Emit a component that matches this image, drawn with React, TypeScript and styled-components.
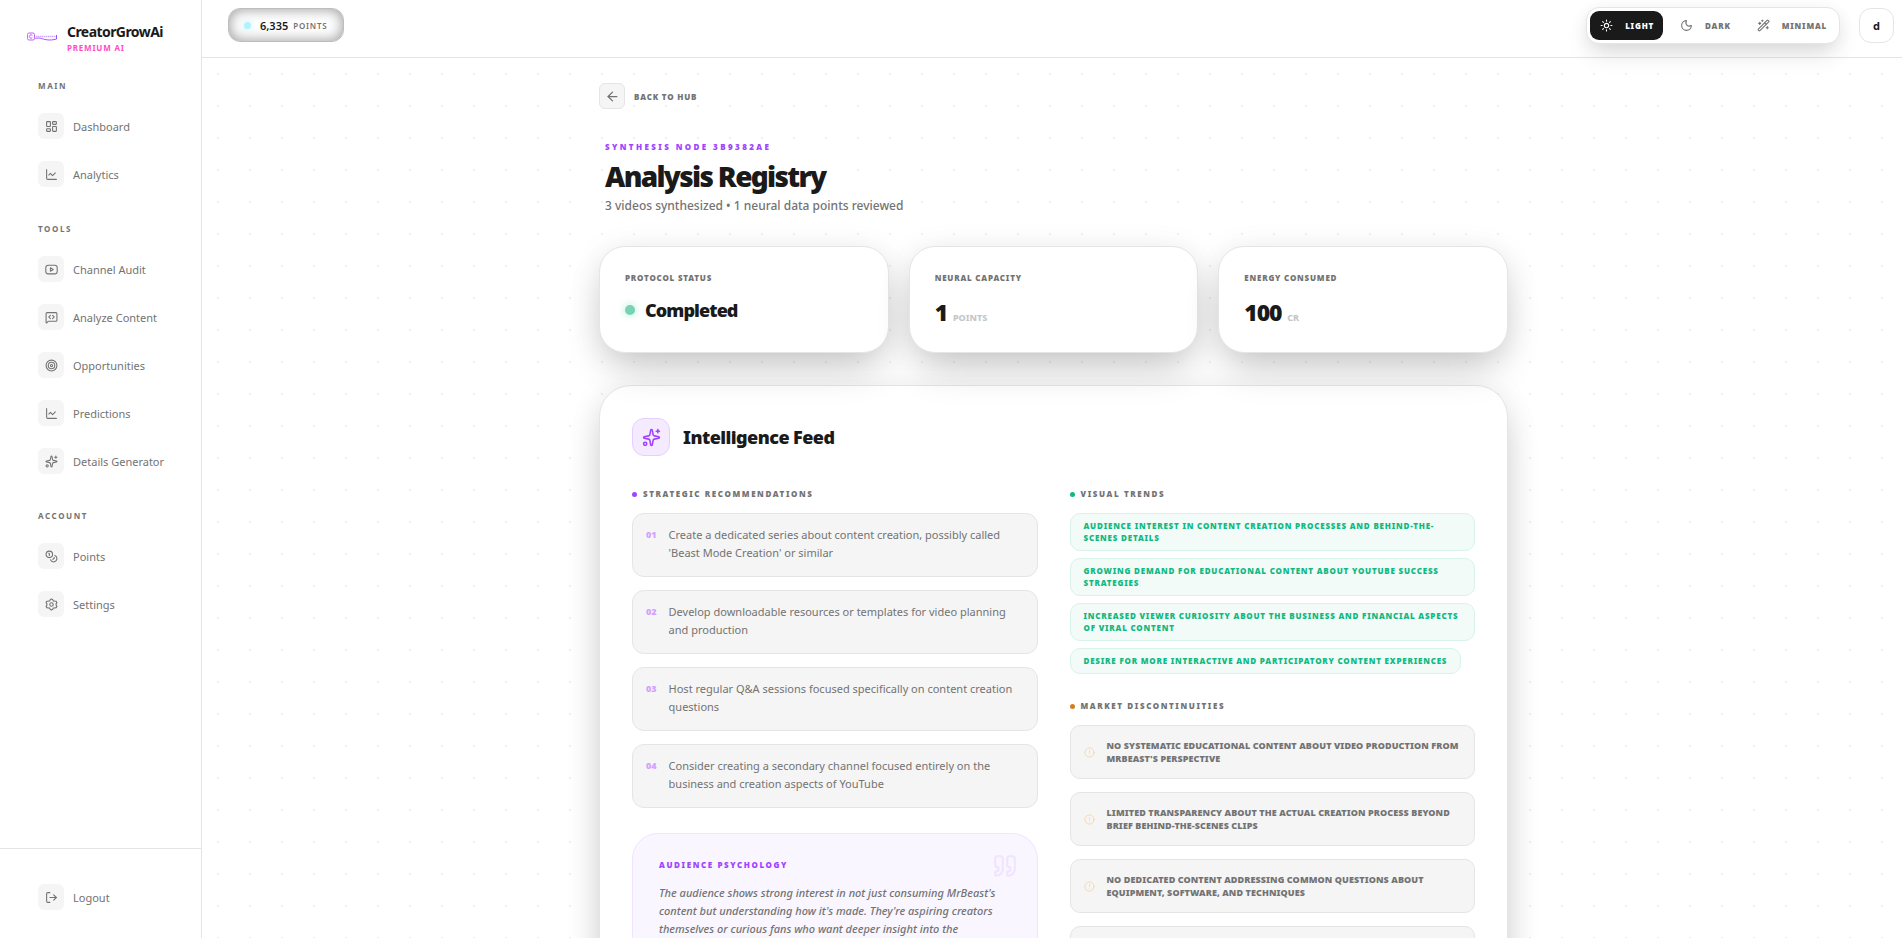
import React from "react";
import styled, { createGlobalStyle, css } from "styled-components";
import {
  ArrowLeft, ChartLine, CircleAlert, Coins, LayoutDashboard, LogOut, MessageSquareCode, Moon,
  Quote, Sparkles, Sun, Target, WandSparkles,
} from "lucide-react";

const ink = "#1a1a1a";
const muted = "#737373";
const line = "#e5e5e5";
const purple = "#a044ff";
const green = "#10b981";
const surface = "#f5f5f5";
const cardShadow = "0 20px 40px -8px rgba(0, 0, 0, 0.2), 0 4px 32px rgba(0, 0, 0, 0.08)";

const GlobalStyle = createGlobalStyle`
  *, *::before, *::after { box-sizing: border-box; }
  body {
    margin: 0;
    background: #fff;
    color: ${ink};
    font-family: "Noto Sans", sans-serif;
  }
  h1, h2, h3, p, ul, ol { margin: 0; padding: 0; }
  ul, ol { list-style: none; }
  button { font: inherit; cursor: pointer; }
  a { color: inherit; text-decoration: none; }
`;

const Shell = styled.div`
  display: grid;
  grid-template-columns: 202px minmax(0, 1fr);
  height: 100vh;
`;

const Sidebar = styled.aside`
  display: flex;
  flex-direction: column;
  height: 100vh;
  border-right: 1px solid ${line};
  background: #fff;
`;

const Brand = styled.a`
  display: flex;
  align-items: center;
  gap: 10px;
  padding: 22px 0 0 27px;
`;

const BrandName = styled.div`
  font-size: 14px;
  font-weight: 700;
  line-height: 20px;
  letter-spacing: -0.04em;
`;

const BrandTag = styled.div`
  color: #ff4dc4;
  font-size: 8px;
  font-weight: 700;
  line-height: 12px;
  letter-spacing: 0.1em;
`;

const Nav = styled.nav`
  flex: 1;
  padding: 26px 0 0 38px;
`;

const NavSection = styled.section`
  margin-bottom: 29px;
`;

const NavLabel = styled.h3`
  margin-bottom: 14px;
  color: ${muted};
  font-size: 8px;
  font-weight: 700;
  line-height: 12px;
  letter-spacing: 0.2em;
`;

const NavList = styled.ul`
  display: flex;
  flex-direction: column;
  gap: 8px;
`;

const NavLink = styled.a`
  display: flex;
  align-items: center;
  gap: 9px;
  height: 40px;
  color: ${muted};
  font-size: 11px;
  font-weight: 400;
`;

const NavIcon = styled.span`
  display: grid;
  place-items: center;
  width: 26px;
  height: 26px;
  border-radius: 6px;
  background: ${surface};
`;

const SidebarFooter = styled.div`
  height: 90px;
  padding: 28px 0 0 38px;
  border-top: 1px solid ${line};
`;

const Page = styled.div`
  display: flex;
  flex-direction: column;
  min-width: 0;
  height: 100vh;
`;

const TopBar = styled.header`
  position: relative;
  z-index: 1;
  display: flex;
  align-items: flex-start;
  justify-content: space-between;
  height: 58px;
  padding: 7px 8px 0 26px;
  border-bottom: 1px solid ${line};
`;

const PointsPill = styled.button`
  display: flex;
  align-items: center;
  height: 34px;
  margin-top: 1px;
  padding: 0 15px;
  border: 1px solid #bdbdbd;
  border-radius: 12px;
  background: #fff;
  box-shadow: inset 0 0 14px rgba(0, 0, 0, 0.42);
  color: ${ink};
  font-size: 11px;
  font-weight: 600;

  small {
    margin-left: 5px;
    color: ${muted};
    font-size: 8px;
    letter-spacing: 0.1em;
  }
`;

const CyanDot = styled.span`
  width: 7px;
  height: 7px;
  margin-right: 9px;
  border-radius: 50%;
  background: #b5f1fb;
  box-shadow: 0 0 6px #b5f1fb;
`;

const TopActions = styled.div`
  display: flex;
  gap: 19px;
`;

const ThemeSwitch = styled.div`
  display: flex;
  gap: 7px;
  height: 37px;
  padding: 3px;
  border: 1px solid ${line};
  border-radius: 13px;
  background: #fff;
  box-shadow: 0 12px 24px -4px rgba(0, 0, 0, 0.14), 0 2px 16px rgba(0, 0, 0, 0.05);
`;

const ThemeButton = styled.button<{ $active?: boolean }>`
  display: flex;
  align-items: center;
  gap: 12px;
  height: 29px;
  padding: 0 9px 0 10px;
  border: 0;
  border-radius: 9px;
  background: ${(p) => (p.$active ? ink : "transparent")};
  color: ${(p) => (p.$active ? "#fff" : muted)};
  font-size: 8px;
  font-weight: 900;
  letter-spacing: 0.1em;
`;

const Avatar = styled.button`
  width: 35px;
  height: 35px;
  margin-top: 1px;
  padding: 0;
  border: 1px solid ${line};
  border-radius: 12px;
  background: #fff;
  color: ${ink};
  font-size: 11px;
  font-weight: 700;
`;

const Main = styled.main`
  flex: 1;
  min-height: 0;
  overflow-y: auto;
  scrollbar-width: none;
  padding: 25px 24px 40px 27px;
  background-image: radial-gradient(#f0f0f0 1px, transparent 1px);
  background-size: 32px 32px;
`;

const Content = styled.div`
  max-width: 909px;
  margin: 0 auto;
`;

const BackLink = styled.a`
  display: inline-flex;
  align-items: center;
  gap: 9px;
  color: ${muted};
  font-size: 8px;
  font-weight: 900;
  letter-spacing: 0.1em;
`;

const BackIcon = styled.span`
  display: grid;
  place-items: center;
  width: 26px;
  height: 26px;
  border: 1px solid ${line};
  border-radius: 6px;
  background: ${surface};
`;

const Heading = styled.div`
  padding: 32px 6px 0;
`;

const Eyebrow = styled.p`
  color: ${purple};
  font-size: 8px;
  font-weight: 900;
  line-height: 12px;
  letter-spacing: 0.3em;
`;

const Title = styled.h1`
  margin-top: 6px;
  font-size: 28px;
  font-weight: 900;
  line-height: 34px;
  letter-spacing: -0.06em;
`;

const Subtitle = styled.p`
  margin-top: 2px;
  color: ${muted};
  font-size: 12px;
  font-weight: 500;
  line-height: 22px;
`;

const Stats = styled.div`
  display: grid;
  grid-template-columns: repeat(3, minmax(0, 1fr));
  gap: 20px;
  margin-top: 29px;
`;

const StatCard = styled.section`
  height: 107px;
  padding: 25px;
  border: 1px solid ${line};
  border-radius: 26px;
  background: #fff;
  box-shadow: ${cardShadow};
`;

const StatLabel = styled.h3`
  color: ${muted};
  font-size: 8px;
  font-weight: 900;
  line-height: 12px;
  letter-spacing: 0.1em;
`;

const StatValue = styled.p<{ $large?: boolean }>`
  display: flex;
  align-items: ${(p) => (p.$large ? "baseline" : "center")};
  gap: ${(p) => (p.$large ? 6 : 10)}px;
  margin-top: ${(p) => (p.$large ? 12 : 14)}px;
  font-size: ${(p) => (p.$large ? 23 : 18)}px;
  font-weight: 900;
  line-height: ${(p) => (p.$large ? 32 : 24)}px;
  letter-spacing: -0.05em;

  small {
    color: #c4c7c6;
    font-size: 9px;
    font-weight: 800;
    letter-spacing: 0;
  }
`;

const StatusDot = styled.span`
  width: 10px;
  height: 10px;
  border-radius: 50%;
  background: #77d3b4;
  box-shadow: 0 0 8px #a5e8d2;
`;

const Feed = styled.section`
  margin-top: 32px;
  padding: 32px;
  border: 1px solid ${line};
  border-radius: 32px;
  background: #fff;
  box-shadow: ${cardShadow};
`;

const FeedHeader = styled.div`
  display: flex;
  align-items: center;
  gap: 13px;
  margin-bottom: 32px;
`;

const FeedIcon = styled.span`
  display: grid;
  place-items: center;
  width: 38px;
  height: 38px;
  border: 1px solid #e6cfff;
  border-radius: 12px;
  background: #f5ebff;
  color: ${purple};
`;

const FeedTitle = styled.h2`
  font-size: 18px;
  font-weight: 900;
  line-height: 26px;
  letter-spacing: -0.03em;
`;

const Columns = styled.div`
  display: grid;
  grid-template-columns: repeat(2, minmax(0, 1fr));
  gap: 32px;
`;

const SectionLabel = styled.h3<{ $dot: string }>`
  display: flex;
  align-items: center;
  gap: 6px;
  margin-bottom: 13px;
  color: ${muted};
  font-size: 8px;
  font-weight: 900;
  line-height: 12px;
  letter-spacing: 0.2em;

  &::before {
    content: "";
    width: 5px;
    height: 5px;
    border-radius: 50%;
    background: ${(p) => p.$dot};
  }
`;

const panel = css`
  border: 1px solid ${line};
  background: ${surface};
  color: ${muted};
`;

const Recommendations = styled.ol`
  display: flex;
  flex-direction: column;
  gap: 13px;
`;

const Recommendation = styled.li`
  ${panel}
  display: flex;
  gap: 12px;
  height: 64px;
  padding: 12px 13px;
  border-radius: 12px;
  font-size: 11px;
  font-weight: 400;
  line-height: 18px;
`;

const Ordinal = styled.span`
  color: #d2a2ff;
  font-size: 9px;
  font-weight: 900;
  line-height: 18px;
`;

const Psychology = styled.section`
  position: relative;
  margin-top: 25px;
  padding: 25px 26px;
  border: 1px solid #f0e4ff;
  border-radius: 26px;
  background: #f9f6ff;
`;

const PsychologyTitle = styled.h3`
  color: ${purple};
  font-size: 8px;
  font-weight: 900;
  line-height: 12px;
  letter-spacing: 0.2em;
`;

const PsychologyText = styled.p`
  margin-top: 13px;
  color: ${muted};
  font-size: 11px;
  font-style: italic;
  font-weight: 500;
  line-height: 18px;
`;

const QuoteMark = styled(Quote)`
  position: absolute;
  top: 19px;
  right: 19px;
  color: #f0e4ff;
`;

const Trends = styled.ul`
  display: flex;
  flex-wrap: wrap;
  gap: 7px;
`;

const Trend = styled.li`
  padding: 6px 13px;
  border: 1px solid #d8f3ea;
  border-radius: 10px;
  background: #f2fbf8;
  color: ${green};
  font-size: 8px;
  font-weight: 900;
  line-height: 12px;
  letter-spacing: 0.1em;
`;

const GapSection = styled.section`
  margin-top: 26px;
`;

const Gaps = styled.ul`
  display: flex;
  flex-direction: column;
  gap: 13px;
`;

const Gap = styled.li`
  ${panel}
  display: flex;
  align-items: center;
  gap: 12px;
  height: 54px;
  padding: 0 13px;
  border-radius: 10px;
  font-size: 9px;
  font-weight: 900;
  line-height: 13px;
  letter-spacing: 0.01em;

  svg { flex: none; color: #fad5a0; }
`;

function VideoIcon({ size = 13 }: { size?: number }) {
  return (
    <svg width={size} height={size} viewBox="0 0 24 24" fill="none" stroke="currentColor" strokeWidth="2" strokeLinejoin="round">
      <rect x="1.5" y="4" width="21" height="16" rx="4.5" />
      <path d="M10 8.8v6.4l5.2-3.2z" />
    </svg>
  );
}

function GearIcon({ size = 13 }: { size?: number }) {
  return (
    <svg width={size} height={size} viewBox="0 0 24 24" fill="none" stroke="currentColor" strokeWidth="2" strokeLinejoin="round">
      <path d="M9.6 3.2 12 1.6l2.4 1.6 1 2.2 2.4.3 2.9.2 1.3 2.7-1.5 2.2v2.4l1.5 2.2-1.3 2.7-2.9.2-2.4.3-1 2.2-2.4 1.6-2.4-1.6-1-2.2-2.4-.3-2.9-.2L2 15.4l1.5-2.2v-2.4L2 8.6l1.3-2.7 2.9-.2 2.4-.3z" />
      <circle cx="12" cy="12" r="3.2" />
    </svg>
  );
}

const sections = [
  { title: "MAIN", items: [["Dashboard", LayoutDashboard], ["Analytics", ChartLine]] },
  {
    title: "TOOLS",
    items: [
      ["Channel Audit", VideoIcon], ["Analyze Content", MessageSquareCode],
      ["Opportunities", Target], ["Predictions", ChartLine], ["Details Generator", Sparkles],
    ],
  },
  { title: "ACCOUNT", items: [["Points", Coins], ["Settings", GearIcon]] },
] as { title: string; items: [string, React.ElementType][] }[];

const recommendations = [
  "Create a dedicated series about content creation, possibly called 'Beast Mode Creation' or similar",
  "Develop downloadable resources or templates for video planning and production",
  "Host regular Q&A sessions focused specifically on content creation questions",
  "Consider creating a secondary channel focused entirely on the business and creation aspects of YouTube",
];

const trends = [
  "AUDIENCE INTEREST IN CONTENT CREATION PROCESSES AND BEHIND-THE-SCENES DETAILS",
  "GROWING DEMAND FOR EDUCATIONAL CONTENT ABOUT YOUTUBE SUCCESS STRATEGIES",
  "INCREASED VIEWER CURIOSITY ABOUT THE BUSINESS AND FINANCIAL ASPECTS OF VIRAL CONTENT",
  "DESIRE FOR MORE INTERACTIVE AND PARTICIPATORY CONTENT EXPERIENCES",
];

const gaps = [
  "NO SYSTEMATIC EDUCATIONAL CONTENT ABOUT VIDEO PRODUCTION FROM MRBEAST'S PERSPECTIVE",
  "LIMITED TRANSPARENCY ABOUT THE ACTUAL CREATION PROCESS BEYOND BRIEF BEHIND-THE-SCENES CLIPS",
  "NO DEDICATED CONTENT ADDRESSING COMMON QUESTIONS ABOUT EQUIPMENT, SOFTWARE, AND TECHNIQUES",
  "",
];

function Logo() {
  return (
    <svg width="30" height="12" viewBox="0 0 30 12" fill="none" aria-hidden="true">
      <defs>
        <linearGradient id="brand" x1="0" y1="0" x2="30" y2="0" gradientUnits="userSpaceOnUse">
          <stop stopColor="#e25cf0" />
          <stop offset="0.4" stopColor="#b05cff" />
          <stop offset="1" stopColor="#9a4dff" />
        </linearGradient>
      </defs>
      <rect x="0.5" y="1" width="7" height="7" rx="1.5" stroke="url(#brand)" />
      <path d="M5.3 3.3a1.7 1.7 0 1 0 0 2.4" stroke="#b05cff" />
      <path d="M9 4.5h20" stroke="#d3a6ff" strokeWidth="1.5" strokeDasharray="1.5 0.5" />
      <path d="M8 6.3c5-1 7 .8 11 1.4s7 .3 10.5-.7V3" stroke="url(#brand)" />
    </svg>
  );
}

function NavItem({ label, icon: Icon }: { label: string; icon: React.ElementType }) {
  return (
    <NavLink href="#">
      <NavIcon><Icon size={13} /></NavIcon>
      {label}
    </NavLink>
  );
}

export default function App() {
  return (
    <>
      <GlobalStyle />
      <Shell>
        <Sidebar>
          <Brand href="#">
            <Logo />
            <div>
              <BrandName>CreatorGrowAi</BrandName>
              <BrandTag>PREMIUM AI</BrandTag>
            </div>
          </Brand>
          <Nav>
            {sections.map((s) => (
              <NavSection key={s.title}>
                <NavLabel>{s.title}</NavLabel>
                <NavList>
                  {s.items.map(([label, icon]) => (
                    <li key={label}><NavItem label={label} icon={icon} /></li>
                  ))}
                </NavList>
              </NavSection>
            ))}
          </Nav>
          <SidebarFooter><NavItem label="Logout" icon={LogOut} /></SidebarFooter>
        </Sidebar>
        <Page>
          <TopBar>
            <PointsPill><CyanDot />6,335 <small>POINTS</small></PointsPill>
            <TopActions>
              <ThemeSwitch>
                <ThemeButton $active><Sun size={13} />LIGHT</ThemeButton>
                <ThemeButton><Moon size={13} />DARK</ThemeButton>
                <ThemeButton><WandSparkles size={13} />MINIMAL</ThemeButton>
              </ThemeSwitch>
              <Avatar>d</Avatar>
            </TopActions>
          </TopBar>
          <Main>
            <Content>
              <BackLink href="#">
                <BackIcon><ArrowLeft size={15} strokeWidth={2} /></BackIcon>BACK TO HUB
              </BackLink>
              <Heading>
                <Eyebrow>SYNTHESIS NODE 3B9382AE</Eyebrow>
                <Title>Analysis Registry</Title>
                <Subtitle>3 videos synthesized • 1 neural data points reviewed</Subtitle>
              </Heading>
              <Stats>
                <StatCard>
                  <StatLabel>PROTOCOL STATUS</StatLabel>
                  <StatValue><StatusDot />Completed</StatValue>
                </StatCard>
                <StatCard>
                  <StatLabel>NEURAL CAPACITY</StatLabel>
                  <StatValue $large>1 <small>POINTS</small></StatValue>
                </StatCard>
                <StatCard>
                  <StatLabel>ENERGY CONSUMED</StatLabel>
                  <StatValue $large>100 <small>CR</small></StatValue>
                </StatCard>
              </Stats>
              <Feed>
                <FeedHeader>
                  <FeedIcon><Sparkles size={19} /></FeedIcon>
                  <FeedTitle>Intelligence Feed</FeedTitle>
                </FeedHeader>
                <Columns>
                  <div>
                    <SectionLabel $dot={purple}>STRATEGIC RECOMMENDATIONS</SectionLabel>
                    <Recommendations>
                      {recommendations.map((text, i) => (
                        <Recommendation key={text}><Ordinal>0{i + 1}</Ordinal><p>{text}</p></Recommendation>
                      ))}
                    </Recommendations>
                    <Psychology>
                      <QuoteMark size={26} />
                      <PsychologyTitle>AUDIENCE PSYCHOLOGY</PsychologyTitle>
                      <PsychologyText>
                        The audience shows strong interest in not just consuming MrBeast's content but
                        understanding how it's made. They're aspiring creators themselves or curious fans
                        who want deeper insight into the
                      </PsychologyText>
                    </Psychology>
                  </div>
                  <div>
                    <SectionLabel $dot={green}>VISUAL TRENDS</SectionLabel>
                    <Trends>{trends.map((t) => <Trend key={t}>{t}</Trend>)}</Trends>
                    <GapSection>
                      <SectionLabel $dot="#d08020">MARKET DISCONTINUITIES</SectionLabel>
                      <Gaps>
                        {gaps.map((g) => (
                          <Gap key={g}><CircleAlert size={11} /><span>{g}</span></Gap>
                        ))}
                      </Gaps>
                    </GapSection>
                  </div>
                </Columns>
              </Feed>
            </Content>
          </Main>
        </Page>
      </Shell>
    </>
  );
}
